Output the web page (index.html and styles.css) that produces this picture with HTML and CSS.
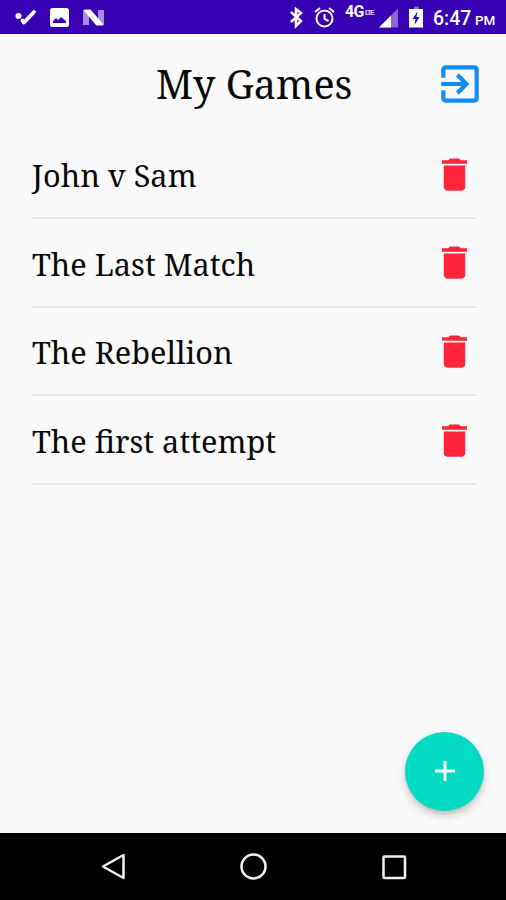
FILE: index.html
```html
<!DOCTYPE html>
<html lang="en">
<head>
<meta charset="utf-8">
<title>My Games</title>
<link rel="stylesheet" href="styles.css">
</head>
<body>
<svg class="defs" aria-hidden="true"><symbol id="trash" viewBox="0 0 24 24"><path d="M6 19c0 1.100.9 2 2 2h8c1.100 0 2-.9 2-2V7H6zM19 4h-3.500l-1-1h-5l-1 1H5v2h14z"/></symbol></svg>
<div class="screen">
  <header class="status">
    <svg class="notifications" viewBox="0 0 120 34"><circle cx="18.500" cy="16" r="3" fill="#fff"/><path d="M22.500 20.500l1.500 2L34 12" fill="none" stroke="#fff" stroke-width="3.800" stroke-linecap="round" stroke-linejoin="round"/><rect x="50" y="8" width="19" height="19" rx="2.500" fill="#fff"/><path d="M53 23v-2l3-3 2 2 3-3 5 4v2z" fill="#3700b3"/><path d="M83 10h6v15h-6zM98 10h6v15h-6z" fill="#a78ce0"/><path d="M85 10.500h5l12 14h-5z" fill="#fff" stroke="#fff" stroke-width="2" stroke-linejoin="round"/></svg>
    <div class="system">
      <svg class="signals" viewBox="0 0 60 34"><path d="M6 12l10 9-5 5V9l5 4L6 22" fill="none" stroke="#fff" stroke-width="2.500"/><g fill="none" stroke="#fff" stroke-width="2"><circle cx="39.500" cy="18.500" r="8"/><path d="M39.500 14v5l4 2M30 12l5-4M49 12l-5-4"/></g></svg>
      <span class="network">4G</span><span class="lte">LTE</span>
      <svg class="power" viewBox="0 0 50 34"><path d="M4 27.500L23 8.500v19z" fill="#8768d4"/><path d="M4 27.500l12-12v12z" fill="#fff"/><path d="M39 6.500h5V9h-5z" fill="#8768d4"/><path d="M34 9h14v18.500H34z" fill="#fff"/><path d="M42.500 11.500l-5 7.500h3l-1 6 5-8h-3z" fill="#3700b3"/></svg>
      <span class="time">6:47</span><span class="period">PM</span>
    </div>
  </header>
  <main class="content">
    <div class="heading"><h1>My Games</h1><svg class="exit" viewBox="0 0 24 24"><path d="M10.090 15.590L11.500 17l5-5-5-5-1.410 1.410L12.670 11H3v2h9.670zM19 3H5c-1.110 0-2 .9-2 2v4h2V5h14v14H5v-4H3v4c0 1.100.89 2 2 2h14c1.100 0 2-.9 2-2V5c0-1.100-.9-2-2-2z"/></svg></div>
    <ul class="games">
      <li><span class="name">John v Sam</span><svg class="trash"><use href="#trash"/></svg></li>
      <li><span class="name">The Last Match</span><svg class="trash"><use href="#trash"/></svg></li>
      <li><span class="name">The Rebellion</span><svg class="trash"><use href="#trash"/></svg></li>
      <li><span class="name">The first attempt</span><svg class="trash"><use href="#trash"/></svg></li>
    </ul>
    <button class="add" aria-label="Add game"><svg viewBox="0 0 22 22"><path d="M11 1v20M1 11h20"/></svg></button>
  </main>
  <nav class="navigation">
    <svg viewBox="0 0 30 30"><path d="M4 14.500L24.500 3v23z"/></svg>
    <svg viewBox="0 0 30 30"><circle cx="14.500" cy="14.500" r="12"/></svg>
    <svg viewBox="0 0 30 30"><rect x="4.500" y="4.500" width="21.500" height="21.500" rx="1"/></svg>
  </nav>
</div>
</body>
</html>
```
FILE: styles.css
```css
* { box-sizing: border-box; }
body { margin: 0; background: #fafafa; color: #080808; }
.defs { position: absolute; width: 0; height: 0; }
.screen { width: 506px; height: 900px; display: flex; flex-direction: column; overflow: hidden; }
.status { height: 34px; flex: none; display: flex; justify-content: space-between; background: #3700b3; border-bottom: 1px solid #2c009b; color: #fff; font-family: Roboto, sans-serif; }
.notifications { width: 120px; height: 34px; }
.system { display: flex; width: 221px; }
.signals { width: 60px; height: 34px; flex: none; }
.network { width: 20px; font: bold 16px/24px Roboto, sans-serif; letter-spacing: -.8px; }
.lte { width: 10px; font: bold 8px/25px Roboto, sans-serif; letter-spacing: -1.700px; color: #d8ccf3; }
.power { width: 50px; height: 34px; flex: none; margin-right: 8px; }
.time { width: 42px; font: 500 19.500px/37px Roboto, sans-serif; }
.period { font: 500 13.500px/40px Roboto, sans-serif; }
.content { position: relative; flex: 1; }
.heading { height: 96.500px; display: grid; grid-template-columns: 434.500px 50px; align-items: start; }
h1 { margin: 23px 0 0 156px; font: 39.500px/54px "Noto Serif", "DejaVu Serif Condensed", serif; white-space: nowrap; }
.exit { width: 50px; height: 50px; margin-top: 25px; fill: #138bf5; }
.games { list-style: none; margin: 0 30px 0 32px; padding: 0; }
.games li { height: 88.600px; border-bottom: 2px solid #e5e5e5; display: flex; justify-content: space-between; align-items: center; }
.name { font: 30.700px/42px "Noto Serif", "DejaVu Serif Condensed", serif; white-space: nowrap; padding-top: 3px; }
.trash { width: 43px; height: 43px; margin-top: 1px; fill: #ff263c; }
.add { position: absolute; right: 22px; bottom: 22.500px; width: 79px; height: 79px; border: 0; border-radius: 50%; background: #03dac5; padding: 0; display: grid; place-items: center; box-shadow: 0 5px 9px #0003, 0 2px 3px #0001; }
.add svg { width: 22px; height: 22px; fill: none; stroke: #fff; stroke-width: 3; }
.navigation { height: 67px; flex: none; background: #000; display: flex; justify-content: space-between; align-items: center; padding: 0 97px 0 99px; }
.navigation svg { width: 30px; height: 30px; fill: none; stroke: #f1f1f1; stroke-width: 2.500; stroke-linejoin: round; }
```
